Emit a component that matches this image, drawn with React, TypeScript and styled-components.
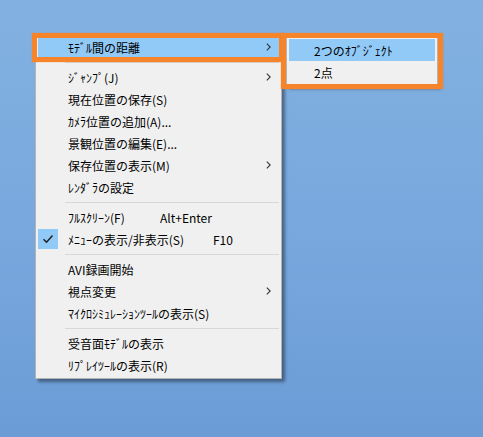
import React from "react";
import styled, { createGlobalStyle } from "styled-components";

const GlobalStyle = createGlobalStyle`
  html, body {
    margin: 0;
    padding: 0;
  }
  body {
    font-family: "Noto Sans CJK JP", "Noto Sans", sans-serif;
  }
`;

const Desktop = styled.div`
  position: relative;
  width: 483px;
  height: 437px;
  overflow: hidden;
  background: linear-gradient(180deg, #82b1e1 0%, #77a7dd 55%, #6c9cd5 100%);
`;

const Menu = styled.div<{ $left: number; $top: number; $width: number }>`
  position: absolute;
  left: ${(p) => p.$left}px;
  top: ${(p) => p.$top}px;
  width: ${(p) => p.$width}px;
  box-sizing: border-box;
  padding: 2px 0;
  background: #f0f0f0;
  border: 1px solid #b4b4b4;
  box-shadow: 3px 3px 3px rgba(0, 0, 0, 0.4);
  display: flex;
  flex-direction: column;
`;

const Item = styled.div<{ $active?: boolean; $indent: number }>`
  position: relative;
  height: 22px;
  margin: 0 2px;
  padding-left: ${(p) => p.$indent}px;
  padding-right: 8px;
  display: flex;
  align-items: center;
  font-size: 12px;
  color: #000;
  white-space: nowrap;
  background: ${(p) => (p.$active ? "#91c9f7" : "transparent")};
`;

const Label = styled.span<{ $min?: number }>`
  min-width: ${(p) => (p.$min ? `${p.$min}px` : "0")};
`;

const Shortcut = styled.span`
  color: #000;
`;

const Arrow = styled.svg`
  margin-left: auto;
  width: 5px;
  height: 8px;
`;

const CheckBox = styled.div`
  position: absolute;
  left: 0;
  top: 1px;
  width: 20px;
  height: 20px;
  background: #91c9f7;
  display: flex;
  align-items: center;
  justify-content: center;
`;

const Separator = styled.div`
  height: 8px;
  display: flex;
  align-items: center;
  padding-left: 29px;
  padding-right: 2px;
  &::after {
    content: "";
    flex: 1;
    height: 1px;
    background: #d7d7d7;
  }
`;

const Highlight = styled.div<{ $left: number; $top: number; $width: number; $height: number }>`
  position: absolute;
  left: ${(p) => p.$left}px;
  top: ${(p) => p.$top}px;
  width: ${(p) => p.$width}px;
  height: ${(p) => p.$height}px;
  box-sizing: border-box;
  border: 5px solid #f6842a;
  box-shadow: 0 0 1px rgba(246, 132, 42, 0.8);
  pointer-events: none;
`;

type Entry =
  | { sep: true }
  | {
      sep?: false;
      label: string;
      sub?: boolean;
      active?: boolean;
      checked?: boolean;
      shortcut?: string;
      labelMin?: number;
    };

const mainItems: Entry[] = [
  { label: "ﾓﾃﾞﾙ間の距離", sub: true, active: true },
  { sep: true },
  { label: "ｼﾞｬﾝﾌﾟ(J)", sub: true },
  { label: "現在位置の保存(S)" },
  { label: "ｶﾒﾗ位置の追加(A)..." },
  { label: "景観位置の編集(E)..." },
  { label: "保存位置の表示(M)", sub: true },
  { label: "ﾚﾝﾀﾞﾗの設定" },
  { sep: true },
  { label: "ﾌﾙｽｸﾘｰﾝ(F)", shortcut: "Alt+Enter", labelMin: 92 },
  { label: "ﾒﾆｭｰの表示/非表示(S)", shortcut: "F10", labelMin: 145, checked: true },
  { sep: true },
  { label: "AVI録画開始" },
  { label: "視点変更", sub: true },
  { label: "ﾏｲｸﾛｼﾐｭﾚｰｼｮﾝﾂｰﾙの表示(S)" },
  { sep: true },
  { label: "受音面ﾓﾃﾞﾙの表示" },
  { label: "ﾘﾌﾟﾚｲﾂｰﾙの表示(R)" },
];

const subItems = [
  { label: "2つのｵﾌﾞｼﾞｪｸﾄ", active: true },
  { label: "2点" },
];

function Chevron() {
  return (
    <Arrow viewBox="0 0 5 8">
      <path d="M0.8 0.6 L4.2 4 L0.8 7.4" fill="none" stroke="#333" strokeWidth="1.1" />
    </Arrow>
  );
}

export default function App() {
  return (
    <>
      <GlobalStyle />
      <Desktop>
        <Menu $left={35} $top={33} $width={247}>
          {mainItems.map((it, i) =>
            it.sep ? (
              <Separator key={i} />
            ) : (
              <Item key={i} $active={it.active} $indent={30}>
                {it.checked && (
                  <CheckBox>
                    <svg width="12" height="10" viewBox="0 0 12 10">
                      <path d="M1.5 5.2 L4.5 8.2 L10.5 1.5" fill="none" stroke="#1d1d1d" strokeWidth="1.4" />
                    </svg>
                  </CheckBox>
                )}
                <Label $min={it.labelMin}>{it.label}</Label>
                {it.shortcut && <Shortcut>{it.shortcut}</Shortcut>}
                {it.sub && <Chevron />}
              </Item>
            )
          )}
        </Menu>
        <Menu $left={286} $top={36} $width={152}>
          {subItems.map((it, i) => (
            <Item key={i} $active={it.active} $indent={25}>
              <Label>{it.label}</Label>
            </Item>
          ))}
        </Menu>
        <Highlight $left={32} $top={33} $width={252} $height={29} />
        <Highlight $left={281} $top={33} $width={162} $height={56} />
      </Desktop>
    </>
  );
}
